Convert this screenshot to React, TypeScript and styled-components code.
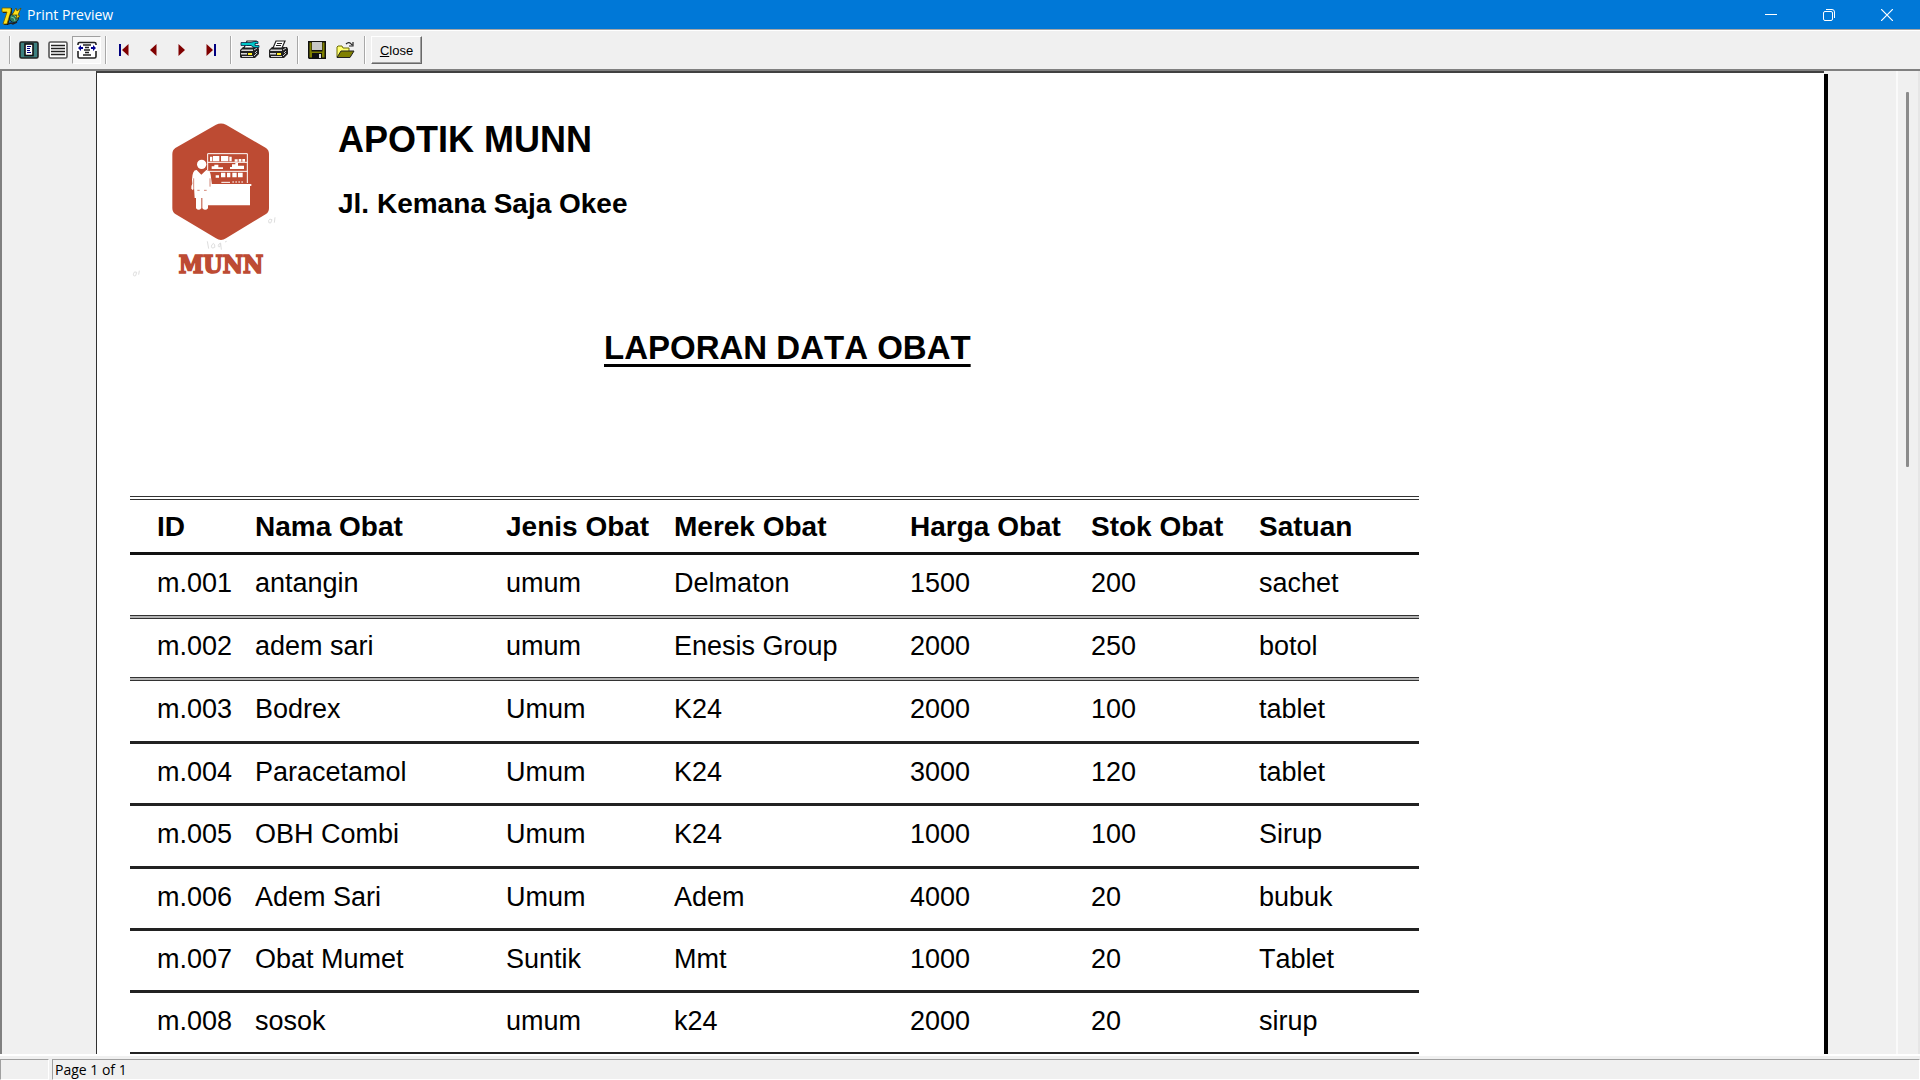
import React from "react";
import styled, { createGlobalStyle } from "styled-components";

const GlobalStyle = createGlobalStyle`
  * { box-sizing: border-box; }
  body { margin: 0; background: #f0f0f0; }
`;

const Window = styled.div`
  display: flex;
  flex-direction: column;
  height: 100vh;
  overflow: hidden;
  background: #f0f0f0;
  font-family: "Open Sans", "Noto Sans", sans-serif;
  color: #000;
`;

const TitleBar = styled.header`
  display: flex;
  align-items: center;
  height: 29px;
  padding: 0 4px 0 1px;
  gap: 5px;
  background: #0078d7;
  color: #fff;
`;

const WindowTitle = styled.h1`
  flex: 1;
  margin: 0;
  font-size: 14px;
  font-weight: 400;
  line-height: 28px;
`;

const WindowControls = styled.div`
  display: flex;
`;

const WindowButton = styled.button`
  display: flex;
  align-items: center;
  justify-content: center;
  width: 58px;
  height: 28px;
  padding: 0;
  border: 0;
  background: transparent;
`;

const Toolbar = styled.div`
  display: flex;
  align-items: center;
  height: 40px;
  padding: 0 5px;
  border-top: 1px solid #a5a5a5;
  box-shadow: inset 0 1px 0 #fff;
`;

const Separator = styled.span`
  width: 2px;
  height: 28px;
  margin: 0 3px 0 4px;
  background: #a8a8a8;
  border-right: 1px solid #fff;
`;

const ToolButton = styled.button<{ $pressed?: boolean }>`
  display: flex;
  align-items: center;
  justify-content: center;
  width: 29px;
  height: 28px;
  padding: 0;
  border: 1px solid;
  border-color: ${(p) => (p.$pressed ? "#a0a0a0 #fff #fff #a0a0a0" : "transparent")};
  background: ${(p) => (p.$pressed ? "#f8f8f8" : "transparent")};
`;

const CloseButton = styled.button`
  width: 51px;
  height: 28px;
  margin-left: 2px;
  padding: 2px 0 0;
  border: 1px solid;
  border-color: #fff #696969 #696969 #fff;
  box-shadow: inset -1px -1px 0 #a0a0a0;
  background: #f0f0f0;
  font: 13px "Liberation Sans", Arial, sans-serif;
  color: #000;
`;

const Preview = styled.main`
  display: flex;
  flex: 1;
  min-height: 0;
  overflow: hidden;
  border-top: 2px solid #808080;
  border-left: 2px solid #808080;
`;

const Desk = styled.div`
  flex: 1;
  min-width: 0;
  overflow: hidden;
  padding: 0 72px 0 94px;
`;

const Paper = styled.article`
  min-height: 100%;
  padding: 47px 33px 0;
  border-top: 2px solid #404040;
  border-left: 1px solid #303030;
  background: #fff;
  box-shadow: 4px 3px 0 #000;
  font-family: "Liberation Sans", Arial, sans-serif;
  font-kerning: none;
`;

const ScrollTrack = styled.div`
  display: flex;
  justify-content: center;
  width: 24px;
  padding: 21px 2px 0 0;
  border-left: 2px solid #fafafa;
  border-right: 2px solid #e6e6e6;
`;

const ScrollThumb = styled.div`
  width: 3px;
  height: 39%;
  border-radius: 1px;
  background: #8b8b8b;
`;

const Letterhead = styled.header`
  display: flex;
  gap: 58px;
  height: 206px;
`;

const Company = styled.div`
  display: flex;
  flex-direction: column;
  gap: 24px;
`;

const CompanyName = styled.h2`
  margin: 0;
  font-size: 36px;
  line-height: 40px;
`;

const Address = styled.p`
  margin: 0;
  font-size: 28px;
  font-weight: 700;
  line-height: 40px;
`;

const ReportTitle = styled.h3`
  margin: 0 0 126px;
  padding-left: 474px;
  font-size: 33px;
  line-height: 44px;
  text-decoration: underline;
  text-decoration-thickness: 3px;
  text-underline-offset: 5px;
`;

const Table = styled.table`
  width: 1289px;
  table-layout: fixed;
  border-collapse: separate;
  border-spacing: 0;
  text-align: left;
`;

const HeadCell = styled.th`
  height: 59px;
  padding: 2px 0 0 1px;
  border-top: 4px double #333;
  border-bottom: 3px solid #111;
  font-size: 28px;
  line-height: 32px;
  &:first-child { padding-left: 27px; }
`;

const Row = styled.tr<{ $double: boolean }>`
  height: 62px;
  &:nth-child(-2n + 5) { height: 63px; }
  &:first-child { height: 64px; }
  td {
    border-bottom: ${(p) => (p.$double ? "4px double #333" : "3px solid #222")};
    background: linear-gradient(#fff, #fff) padding-box, #b4b4b4 border-box;
  }
`;

const Cell = styled.td`
  padding: 0 0 4px 1px;
  font-size: 27px;
  line-height: 32px;
  white-space: nowrap;
  &:first-child { padding-left: 27px; }
`;

const StatusBar = styled.footer`
  display: flex;
  gap: 3px;
  height: 26px;
  padding: 3px 0 1px;
  border-top: 2px solid #fff;
  font-size: 14px;
`;

const StatusPanel = styled.div<{ $grow?: boolean }>`
  flex: ${(p) => (p.$grow ? "1" : "0 0 49px")};
  height: 21px;
  padding-left: 2px;
  border: 1px solid;
  border-color: #a0a0a0 #fff #fff #a0a0a0;
  line-height: 20px;
`;

const Delphi = () => (
  <svg width="21" height="22" viewBox="0 0 21 22">
    <path d="M2 4h9v4L7 21H3l4-12H2z" fill="#111" />
    <path d="M1 4h9v3L6 20H2L6 8H1z" fill="#ffe11a" stroke="#6b5a00" strokeWidth=".8" />
    <circle cx="13" cy="14" r="4.500" fill="#2c7d62" stroke="#123" />
    <path d="M10 13l3 1 1 3M13 11l3 3" stroke="#77c49e" fill="none" />
    <path d="M11 11l4-7 1 3 4-3-3 7 2 1-4 3 1-4z" fill="#ffe11a" stroke="#5b4a00" strokeWidth=".8" />
    <path d="M7 20l3-1 2 1 4-2" stroke="#222" strokeWidth="1.5" fill="none" />
  </svg>
);

const FitPage = () => (
  <svg width="20" height="18" viewBox="0 0 20 18">
    <rect x="1" y="1" width="18" height="16" rx="1.500" fill="#3d8080" stroke="#222" strokeWidth="1.6" />
    <rect x="6" y="3" width="8" height="11.500" fill="#fff" stroke="#111" strokeWidth="1.6" />
    <path d="M8 5.500h4M8 7.500h3M8 9.500h3M8 11.500h4" stroke="#000080" strokeWidth="1.2" />
  </svg>
);

const FullSize = () => (
  <svg width="20" height="18" viewBox="0 0 20 18">
    <rect x="1" y="1" width="18" height="16" rx="1.500" fill="#fff" stroke="#555" strokeWidth="1.6" />
    <path d="M3 4.500h14M3 7.500h14M3 10.500h14M3 13.500h14" stroke="#222" strokeWidth="1.5" />
  </svg>
);

const FitWidth = () => (
  <svg width="20" height="18" viewBox="0 0 20 18">
    <rect x="1" y="1.500" width="18" height="15.500" rx="1.500" fill="#fff" stroke="#222" strokeWidth="1.6" />
    <path d="M0 4h6v6H0zM14 4h6v6h-6z" fill="#fff" />
    <path d="M6 4h8M8 6.500h4M7 9h6M8 11.500h4M6 14h8" stroke="#222" strokeWidth="1.3" />
    <path d="M1 7l3-3v2h2v2H4v2zM19 7l-3-3v2h-2v2h2v2z" fill="#000090" />
  </svg>
);

const Arrow = ({ left, bar }: { left?: boolean; bar?: boolean }) => (
  <svg width="14" height="12" viewBox="0 0 14 12">
    <g transform={left ? undefined : "matrix(-1 0 0 1 12 0)"}>
      {bar && <path d="M1 0h2v12H1z" fill="#000080" />}
      <path d={bar ? "M4 6l6.500-6v12z" : "M3 6l6.500-6v12z"} fill="#800000" />
    </g>
  </svg>
);

const Printer = ({ setup }: { setup?: boolean }) => (
  <svg width="21" height="19" viewBox="0 0 21 19">
    <path d="M1 10l3-3h15l1 2v5l-4 4H2l-1-1z" fill="#222" />
    <path d="M3 9.500h11v1.500H2zM2 13h6v1.500H2zM3 16h11v1H3z" fill="#d8d8d8" />
    <path d="M9 13h4v2H9z" fill="#ffef20" />
    <path d="M15 10l3-2M16 13l2-2M15 16l3-3" stroke="#ddd" strokeWidth=".9" />
    <path d="M5 8l3-7h9l-3 7z" fill="#fff" stroke="#222" strokeWidth="1.2" />
    <path d="M9 3.500h5M8 5.500h5" stroke="#222" />
    {setup && (
      <path d="M2 2.500h10l3-1h4v2h-3v2h4v2h-5l-3-2H2z" fill="#00c8c8" stroke="#124" strokeWidth=".8" />
    )}
  </svg>
);

const Save = () => (
  <svg width="18" height="18" viewBox="0 0 18 18">
    <path d="M0 0h18v18H1l-1-1z" fill="#111" />
    <path d="M1.500 1.500h2v9h11v-9h2v15h-15z" fill="#808000" />
    <path d="M4 1h10v8H4z" fill="#c6c6c6" />
    <path d="M4 12h10v5H4z" fill="#111" />
    <path d="M11 13h2v4h-2z" fill="#ddd" />
  </svg>
);

const Open = () => (
  <svg width="19" height="18" viewBox="0 0 19 18">
    <path d="M1 16V6l1-1h4l1 2h6v3" fill="#ffff70" stroke="#6b6b00" strokeWidth="1" />
    <path d="M1 16.500L5 10h13l-4 6.500z" fill="#808000" stroke="#222" />
    <path d="M10 3c2-2 4-2 6 1m1-3v4h-4" fill="none" stroke="#222" strokeWidth="1.2" />
  </svg>
);

const Minimize = () => (
  <svg width="12" height="12"><path d="M0 5.500h12" stroke="#fff" /></svg>
);
const Restore = () => (
  <svg width="12" height="12" fill="none" stroke="#fff">
    <rect x=".5" y="2.500" width="9" height="9" rx="1.500" />
    <path d="M3 .5h6q2.500 0 2.500 2.500v6" />
  </svg>
);
const CloseGlyph = () => (
  <svg width="12" height="12"><path d="M0 0l12 12M12 0L0 12" stroke="#fff" strokeWidth="1.200" /></svg>
);

const Logo = () => (
  <svg width="150" height="160" viewBox="30 30 450 480" role="img" aria-label="MUNN">
    <path
      d="M288 44q15-7 30 0l120 70q9 6 9 18v162q0 12-9 18l-120 73q-15 10-30 0L166 312q-9-6-9-18V132q0-12 9-18z"
      fill="#bd4b33"
    />
    <g fill="none" stroke="#fff" strokeWidth="3">
      <path d="M263 180v-49h119v88M263 157h119M263 184h119M304 217h26" />
      <path d="M337 216h36" strokeDasharray="5 4" />
    </g>
    <path
      d="M270 140h7v14h-7zM279 138h19v16h-19zM303 138h22v16h-22zM328 140h7v14h-7zM344 148h9v7h-9zM356 147h8v8h-8zM367 147h8v8h-8zM275 169h8v-5h12v8h14v5h-34zM330 171h6v-8h10v-4h8v8h18v10h-42zM287 196h10v7h-10zM303 188h13v14h-13zM321 188h10v14h-10zM337 188h13v14h-13zM354 188h14v14h-14z"
      fill="#fff"
    />
    <path d="M264 222h130v6h-4v58H264z" fill="#fff" />
    <circle cx="245" cy="163" r="14" fill="#fff" />
    <path
      d="M230 180l14 14 15-14q11 1 13 14l4 31q4 7 3 15l-7 4-3-12-2 32h-3v31q-8 9-17 0v-31h-3v31q-8 9-16 0v-31h-4l-2-34-3 11-5-5q-1-9 3-15l-1-12q1-30 14-29z"
      fill="#fff"
    />
    <path d="M232 241h7M252 241h8M221 205v28M270 205v25" stroke="#bd4b33" strokeWidth="2" />
    <text
      x="303"
      y="490"
      textAnchor="middle"
      fill="#bd4b33"
      stroke="#bd4b33"
      strokeWidth="5"
      fontFamily="'DejaVu Serif Condensed', 'DejaVu Serif', serif"
      fontWeight="700"
      fontSize="74"
    >
      MUNN
    </text>
    <g fill="none" stroke="#dedede" strokeWidth="3">
      <path d="M41 490q-3 10 6 7l3-10q-8-4-9 3M58 482l-2 12M446 331q-2 10 6 8l4-10q-8-4-10 2M465 322l-2 16" />
      <path d="M262 394l4 22M276 404q-5 10 3 10t5-9-8-1M297 402q-6 10 3 8l2-11-5 3m5-1l2 18M315 396l5-2" />
    </g>
  </svg>
);

const columns = [
  { label: "ID", width: 124 },
  { label: "Nama Obat", width: 251 },
  { label: "Jenis Obat", width: 168 },
  { label: "Merek Obat", width: 236 },
  { label: "Harga Obat", width: 181 },
  { label: "Stok Obat", width: 168 },
  { label: "Satuan", width: 161 },
];

const medicines = [
  ["m.001", "antangin", "umum", "Delmaton", "1500", "200", "sachet"],
  ["m.002", "adem sari", "umum", "Enesis Group", "2000", "250", "botol"],
  ["m.003", "Bodrex", "Umum", "K24", "2000", "100", "tablet"],
  ["m.004", "Paracetamol", "Umum", "K24", "3000", "120", "tablet"],
  ["m.005", "OBH Combi", "Umum", "K24", "1000", "100", "Sirup"],
  ["m.006", "Adem Sari", "Umum", "Adem", "4000", "20", "bubuk"],
  ["m.007", "Obat Mumet", "Suntik", "Mmt", "1000", "20", "Tablet"],
  ["m.008", "sosok", "umum", "k24", "2000", "20", "sirup"],
];

export default function App() {
  return (
    <Window>
      <GlobalStyle />
      <TitleBar>
        <Delphi />
        <WindowTitle>Print Preview</WindowTitle>
        <WindowControls>
          <WindowButton aria-label="Minimize"><Minimize /></WindowButton>
          <WindowButton aria-label="Restore"><Restore /></WindowButton>
          <WindowButton aria-label="Close window"><CloseGlyph /></WindowButton>
        </WindowControls>
      </TitleBar>
      <Toolbar role="toolbar">
        <Separator />
        <ToolButton aria-label="Zoom to fit"><FitPage /></ToolButton>
        <ToolButton aria-label="100%"><FullSize /></ToolButton>
        <ToolButton aria-label="Zoom to width" aria-pressed="true" $pressed><FitWidth /></ToolButton>
        <Separator />
        <ToolButton aria-label="First page"><Arrow left bar /></ToolButton>
        <ToolButton aria-label="Previous page"><Arrow left /></ToolButton>
        <ToolButton aria-label="Next page"><Arrow /></ToolButton>
        <ToolButton aria-label="Last page"><Arrow bar /></ToolButton>
        <Separator />
        <ToolButton aria-label="Printer setup"><Printer setup /></ToolButton>
        <ToolButton aria-label="Print"><Printer /></ToolButton>
        <Separator />
        <ToolButton aria-label="Save report"><Save /></ToolButton>
        <ToolButton aria-label="Load report"><Open /></ToolButton>
        <Separator />
        <CloseButton><u>C</u>lose</CloseButton>
      </Toolbar>
      <Preview>
        <Desk>
          <Paper>
            <Letterhead>
              <Logo />
              <Company>
                <CompanyName>APOTIK MUNN</CompanyName>
                <Address>Jl. Kemana Saja Okee</Address>
              </Company>
            </Letterhead>
            <ReportTitle>LAPORAN DATA OBAT</ReportTitle>
            <Table>
              <colgroup>
                {columns.map((c) => <col key={c.label} style={{ width: c.width }} />)}
              </colgroup>
              <thead>
                <tr>{columns.map((c) => <HeadCell key={c.label} scope="col">{c.label}</HeadCell>)}</tr>
              </thead>
              <tbody>
                {medicines.map((m, i) => (
                  <Row key={m[0]} $double={i < 2}>
                    {m.map((value, j) => <Cell key={j}>{value}</Cell>)}
                  </Row>
                ))}
              </tbody>
            </Table>
          </Paper>
        </Desk>
        <ScrollTrack><ScrollThumb /></ScrollTrack>
      </Preview>
      <StatusBar>
        <StatusPanel />
        <StatusPanel $grow>Page 1 of 1</StatusPanel>
      </StatusBar>
    </Window>
  );
}
